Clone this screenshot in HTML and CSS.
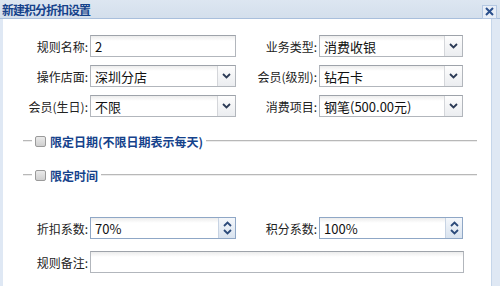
FILE: index.html
```html
<!DOCTYPE html>
<html lang="zh-CN">
<head>
    <meta charset="UTF-8">
    <title>新建积分折扣设置</title>
    <link rel="stylesheet" href="styles.css">
</head>
<body>
    <div class="window">
        <div class="titlebar">
            <span class="title">新建积分折扣设置</span>
            <span class="close">
                <svg width="9" height="9" viewBox="0 0 9 9"><path d="M1 1L8 8M8 1L1 8" stroke="#2a4f8c" stroke-width="2"/></svg>
            </span>
        </div>
        <div class="body">
            <div class="row">
                <label class="lbl">规则名称:</label>
                <div class="field"><span class="val">2</span></div>
                <label class="lbl lbl2">业务类型:</label>
                <div class="field field2 combo"><span class="val">消费收银</span><span class="trigger"><svg width="9" height="6" viewBox="0 0 9 6"><path d="M1 1L4.5 4.5L8 1" fill="none" stroke="#2b3a55" stroke-width="1.8"/></svg></span></div>
            </div>
            <div class="row">
                <label class="lbl">操作店面:</label>
                <div class="field combo"><span class="val">深圳分店</span><span class="trigger"><svg width="9" height="6" viewBox="0 0 9 6"><path d="M1 1L4.5 4.5L8 1" fill="none" stroke="#2b3a55" stroke-width="1.8"/></svg></span></div>
                <label class="lbl lbl2">会员(级别):</label>
                <div class="field field2 combo"><span class="val">钻石卡</span><span class="trigger"><svg width="9" height="6" viewBox="0 0 9 6"><path d="M1 1L4.5 4.5L8 1" fill="none" stroke="#2b3a55" stroke-width="1.8"/></svg></span></div>
            </div>
            <div class="row">
                <label class="lbl">会员(生日):</label>
                <div class="field combo"><span class="val">不限</span><span class="trigger"><svg width="9" height="6" viewBox="0 0 9 6"><path d="M1 1L4.5 4.5L8 1" fill="none" stroke="#2b3a55" stroke-width="1.8"/></svg></span></div>
                <label class="lbl lbl2">消费项目:</label>
                <div class="field field2 combo"><span class="val">钢笔(500.00元)</span><span class="trigger"><svg width="9" height="6" viewBox="0 0 9 6"><path d="M1 1L4.5 4.5L8 1" fill="none" stroke="#2b3a55" stroke-width="1.8"/></svg></span></div>
            </div>

            <div class="section first">
                <span class="line short"></span>
                <span class="check"></span>
                <span class="legend">限定日期(不限日期表示每天)</span>
                <span class="line"></span>
            </div>
            <div class="section">
                <span class="line short"></span>
                <span class="check"></span>
                <span class="legend">限定时间</span>
                <span class="line"></span>
            </div>

            <div class="row spin-row">
                <label class="lbl">折扣系数:</label>
                <div class="field spin"><span class="val">70%</span><span class="spinner"><svg width="9" height="16" viewBox="0 0 9 16"><path d="M1 6L4.5 2.5L8 6M1 10L4.5 13.5L8 10" fill="none" stroke="#2b4a7a" stroke-width="1.8"/></svg></span></div>
                <label class="lbl lbl2">积分系数:</label>
                <div class="field field2 spin"><span class="val">100%</span><span class="spinner"><svg width="9" height="16" viewBox="0 0 9 16"><path d="M1 6L4.5 2.5L8 6M1 10L4.5 13.5L8 10" fill="none" stroke="#2b4a7a" stroke-width="1.8"/></svg></span></div>
            </div>
            <div class="row">
                <label class="lbl">规则备注:</label>
                <div class="field wide"><span class="val"></span></div>
            </div>
        </div>
    </div>
</body>
</html>
```

FILE: styles.css
```css
body {
    margin: 0;
    font-family: "Noto Sans CJK SC", "Noto Sans", sans-serif;
    font-size: 12px;
    color: #222;
    background: #fff;
}
.window {
    width: 500px;
    height: 286px;
    background: #dfe8f4;
}
.titlebar {
    height: 18px;
    display: flex;
    align-items: center;
    justify-content: space-between;
    padding: 0 3px 0 2px;
    background: linear-gradient(#dde6f1, #d4dfec);
    border-bottom: 1px solid #a9bfdc;
}
.title {
    font-weight: bold;
    font-size: 12px;
    letter-spacing: -1px;
    color: #15428b;
}
.close {
    width: 13px;
    height: 12px;
    margin-top: 5px;
    border: 1px solid #b5c8e2;
    background: #e8eef7;
    display: flex;
    align-items: center;
    justify-content: center;
}
.body {
    height: 267px;
    box-sizing: border-box;
    margin-left: 3px;
    width: 489px;
    padding-top: 16px;
    background: #fff;
    border-right: 1px solid #c6d6ea;
}
.row {
    display: flex;
    align-items: center;
    height: 22px;
    margin-bottom: 8px;
}
.lbl {
    width: 85px;
    margin-right: 2px;
    text-align: right;
    white-space: nowrap;
}
.lbl2 {
    width: 81px;
}
.field {
    width: 146px;
    height: 22px;
    box-sizing: border-box;
    border: 1px solid #b2b6bc;
    border-top-color: #9ea3aa;
    background: linear-gradient(#ececec, #fff 5px);
    display: flex;
    align-items: center;
}
.field2 {
    width: 144px;
}
.wide {
    width: 374px;
}
.val {
    flex: 1;
    padding-left: 4px;
    font-size: 13px;
    color: #111;
    white-space: nowrap;
}
.trigger {
    width: 17px;
    height: 20px;
    border-left: 1px solid #d4d6da;
    background: linear-gradient(#fdfdfd, #ebedf0);
    display: flex;
    align-items: center;
    justify-content: center;
}
.spin {
    border-color: #8fa7c6;
}
.spinner {
    width: 16px;
    height: 20px;
    background: linear-gradient(#f4f7fb, #d9e3ef);
    border-left: 1px solid #c7d3e3;
    display: flex;
    align-items: center;
    justify-content: center;
}
.section {
    display: flex;
    align-items: center;
    height: 16px;
    width: 454px;
    margin-left: 20px;
    margin-bottom: 18px;
}
.section.first {
    margin-top: 16px;
}
.line {
    flex: 1;
    height: 1px;
    background: #b8b8b8;
    border-bottom: 1px solid #ececec;
}
.line.short {
    flex: none;
    width: 9px;
}
.check {
    width: 9px;
    height: 9px;
    margin-left: 3px;
    border: 1px solid #9a9a9a;
    border-radius: 2px;
    background: linear-gradient(#eaeaea, #cfcfcf);
}
.legend {
    margin-left: 4px;
    padding-right: 3px;
    font-weight: bold;
    color: #15428b;
}
.spin-row {
    margin-top: 34px;
    margin-bottom: 12px;
}
```
